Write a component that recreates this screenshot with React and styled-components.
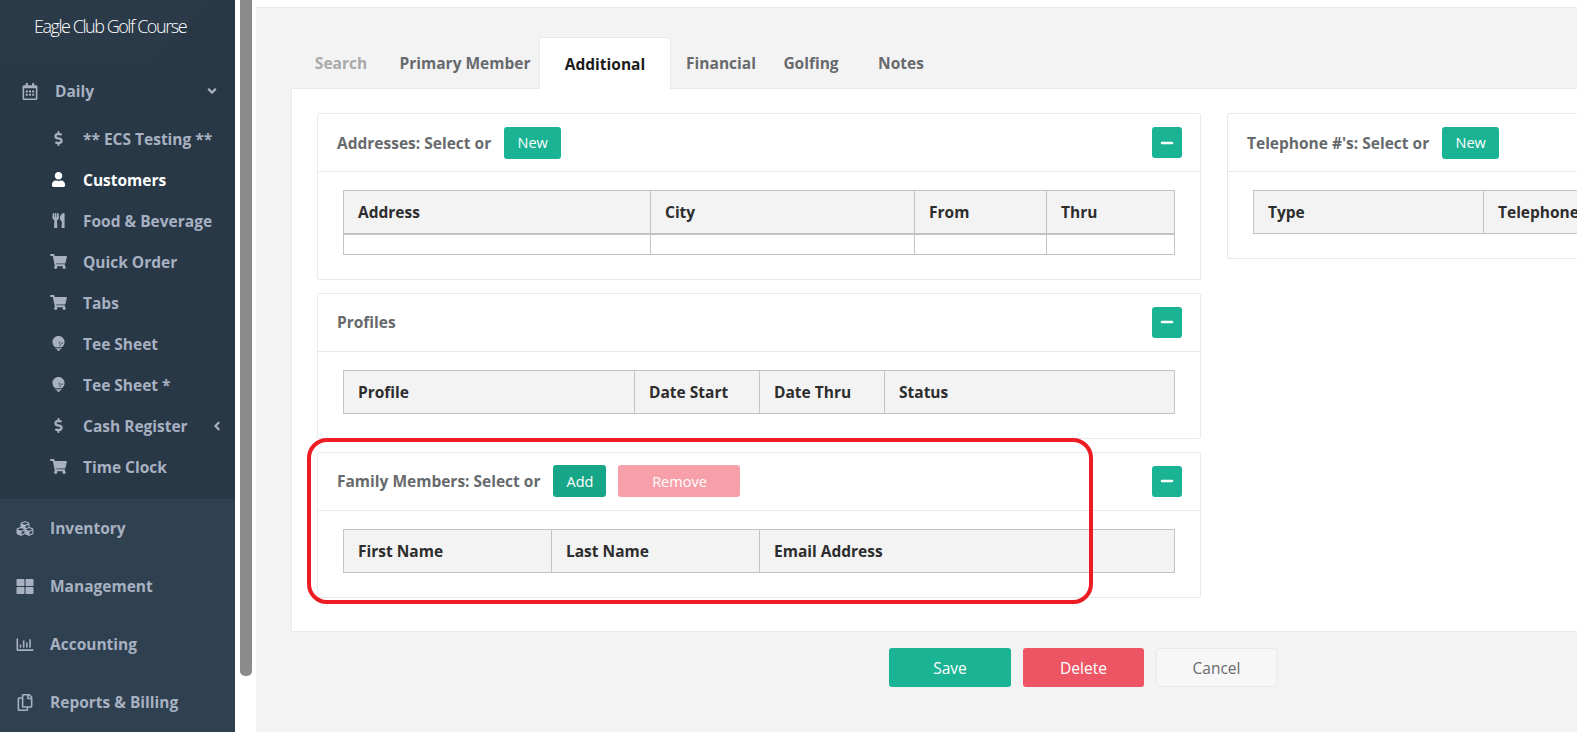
import React from 'react';
import styled, { createGlobalStyle } from 'styled-components';
import {
  FaRegCalendarAlt, FaDollarSign, FaUser, FaUtensils, FaShoppingCart, FaGolfBall,
  FaCubes, FaThLarge, FaRegChartBar, FaRegCopy, FaMinus, FaAngleDown, FaAngleLeft,
} from 'react-icons/fa';

const GlobalStyle = createGlobalStyle`
  html, body { margin: 0; padding: 0; height: 100%; overflow: hidden; }
  body { font-family: "Open Sans", "Liberation Sans", sans-serif; background: #fff; }
  #root { height: 100%; }
`;

const Page = styled.div`
  display: flex;
  width: 1577px;
  height: 732px;
  overflow: hidden;
  background: #fff;
`;

const Sidebar = styled.nav`
  flex: 0 0 235px;
  display: flex;
  flex-direction: column;
  background: #2f4050;
`;

const Logo = styled.div`
  height: 64px;
  padding-top: 14px;
  box-sizing: border-box;
  text-align: center;
  padding-right: 15px;
  color: #fff;
  font-size: 18px;
  font-weight: 300;
  line-height: 25px;
  letter-spacing: -1.45px;
  white-space: nowrap;
  background: linear-gradient(135deg, #2b3a49 0 70%, #293846 70%);
`;

const DailyBlock = styled.div`
  background: #293846;
  height: 435px;
  padding-top: 0;
`;

const TopRow = styled.div`
  display: flex;
  align-items: center;
  height: ${(p) => p.$h || 58}px;
  padding-left: ${(p) => p.$pad || 15}px;
  color: #a7b1c2;
  font-size: 15.5px;
  font-weight: 700;
  svg.main { flex: 0 0 20px; width: 18px; height: 17px; margin-right: 15px; }
`;

const Row = styled.div`
  display: flex;
  align-items: center;
  height: 41px;
  padding-left: 50px;
  color: ${(p) => (p.$active ? '#fff' : '#a7b1c2')};
  font-size: 15.5px;
  font-weight: 700;
  white-space: nowrap;
  svg.main { flex: 0 0 17px; width: 15px; height: 15px; margin-right: 16px; }
`;

const Caret = styled.span`
  position: absolute;
  display: flex;
  left: ${(p) => p.$x}px;
  svg { width: 14px; height: 14px; }
`;

const CaretHolder = styled.div`
  position: relative;
`;

const ScrollTrack = styled.div`
  flex: 0 0 12px;
  margin-left: 5px;
  height: 676px;
  background: #8b8b8b;
  border-radius: 0 0 5px 5px;
`;

const Main = styled.main`
  flex: 0 0 1322px;
  margin-left: 4px;
  margin-top: 7px;
  background: #f3f3f4;
  border-top: 1px solid #e7eaec;
  box-sizing: border-box;
  padding: 29px 0 0 35px;
  overflow: hidden;
`;

const Tabs = styled.div`
  display: flex;
  height: 52px;
  box-sizing: border-box;
  position: relative;
  z-index: 1;
`;

const Tab = styled.div`
  display: flex;
  align-items: center;
  justify-content: center;
  height: ${(p) => (p.$active ? 52 : 51)}px;
  box-sizing: border-box;
  width: ${(p) => p.$w}px;
  font-size: 15.5px;
  font-weight: 700;
  color: ${(p) => (p.$active ? '#1a1a1a' : p.$muted ? '#a9a9a9' : '#676a6c')};
  background: ${(p) => (p.$active ? '#fff' : 'transparent')};
  border: ${(p) => (p.$active ? '1px solid #e7eaec' : 'none')};
  border-bottom: none;
  border-radius: 3px 3px 0 0;
  white-space: nowrap;
`;

const TabPane = styled.div`
  width: 1500px;
  height: 544px;
  margin-top: -1px;
  box-sizing: border-box;
  padding: 24px 0 0 25px;
  background: #fff;
  border: 1px solid #e7eaec;
  display: grid;
  grid-template-columns: 884px 884px;
  column-gap: 26px;
  align-items: start;
`;

const Column = styled.div`
  display: flex;
  flex-direction: column;
  gap: 13px;
`;

const Panel = styled.section`
  border: 1px solid #e7eaec;
  border-radius: 2px;
  background: #fff;
`;

const PanelHead = styled.header`
  display: flex;
  align-items: center;
  height: ${(p) => p.$h || 57}px;
  padding: 0 18px 0 19px;
  border-bottom: 1px solid #e7eaec;
  color: #676a6c;
  font-size: 15.5px;
  font-weight: 700;
  white-space: nowrap;
`;

const HeadTitle = styled.span`
  margin-right: 13px;
`;

const SmallBtn = styled.button`
  height: 32px;
  width: ${(p) => p.$w}px;
  margin-right: 12px;
  padding: 0;
  border: none;
  border-radius: 3px;
  background: ${(p) => p.$bg || '#1ab394'};
  color: #fff;
  font-family: inherit;
  font-size: 14.5px;
`;

const Collapse = styled.button`
  margin-left: auto;
  width: 30px;
  height: 31px;
  padding: 0;
  border: none;
  border-radius: 3px;
  background: #1ab394;
  color: #fff;
  display: flex;
  align-items: center;
  justify-content: center;
  svg { width: 14px; height: 14px; }
`;

const PanelBody = styled.div`
  padding: 18px 25px ${(p) => p.$pb || 24}px;
`;

const Table = styled.table`
  width: 100%;
  border-collapse: collapse;
  table-layout: fixed;
`;

const Th = styled.th`
  height: 43px;
  box-sizing: border-box;
  width: ${(p) => (p.$w ? `${p.$w}px` : 'auto')};
  padding: 0 14px;
  text-align: left;
  background: #f3f3f3;
  border: 1px solid #c4c4c4;
  border-bottom-width: ${(p) => (p.$thick ? 2 : 1)}px;
  color: #2d2d2d;
  font-size: 15.5px;
  font-weight: 700;
  white-space: nowrap;
`;

const Td = styled.td`
  height: 19px;
  padding: 0;
  border: 1px solid #c4c4c4;
`;

const Actions = styled.div`
  display: flex;
  gap: 12px;
  margin: 16px 0 0 598px;
`;

const ActionBtn = styled.button`
  width: ${(p) => p.$w}px;
  height: 39px;
  padding: 0;
  border: ${(p) => (p.$plain ? '1px solid #e7eaec' : 'none')};
  border-radius: 3px;
  background: ${(p) => p.$bg};
  color: ${(p) => (p.$plain ? '#676a6c' : '#fff')};
  font-family: inherit;
  font-size: 15.5px;
`;

const Annotation = styled.div`
  position: absolute;
  left: 307px;
  top: 438px;
  width: 786px;
  height: 166px;
  box-sizing: border-box;
  border: 4px solid #ed1c24;
  border-radius: 20px;
`;

const daily = [
  { icon: FaDollarSign, label: '** ECS Testing **' },
  { icon: FaUser, label: 'Customers', active: true },
  { icon: FaUtensils, label: 'Food & Beverage' },
  { icon: FaShoppingCart, label: 'Quick Order' },
  { icon: FaShoppingCart, label: 'Tabs' },
  { icon: FaGolfBall, label: 'Tee Sheet' },
  { icon: FaGolfBall, label: 'Tee Sheet *' },
  { icon: FaDollarSign, label: 'Cash Register', sub: true },
  { icon: FaShoppingCart, label: 'Time Clock' },
];

const sections = [
  { icon: FaCubes, label: 'Inventory' },
  { icon: FaThLarge, label: 'Management' },
  { icon: FaRegChartBar, label: 'Accounting' },
  { icon: FaRegCopy, label: 'Reports & Billing' },
];

export default function App() {
  return (
    <>
      <GlobalStyle />
      <Page>
        <Sidebar>
          <Logo>Eagle Club Golf Course</Logo>
          <DailyBlock>
            <TopRow $h={54} $pad={20}>
              <FaRegCalendarAlt className="main" />
              Daily
              <CaretHolder><Caret $x={-2 + 113} style={{ top: -7 }}><FaAngleDown /></Caret></CaretHolder>
            </TopRow>
            {daily.map((item) => (
              <Row key={item.label} $active={item.active}>
                <item.icon className="main" />
                {item.label}
                {item.sub && <CaretHolder><Caret $x={22} style={{ top: -7 }}><FaAngleLeft /></Caret></CaretHolder>}
              </Row>
            ))}
          </DailyBlock>
          {sections.map((item) => (
            <TopRow key={item.label}>
              <item.icon className="main" />
              {item.label}
            </TopRow>
          ))}
        </Sidebar>
        <ScrollTrack />
        <Main>
          <Tabs>
            <Tab $w={100} $muted>Search</Tab>
            <Tab $w={148}>Primary Member</Tab>
            <Tab $w={132} $active>Additional</Tab>
            <Tab $w={100}>Financial</Tab>
            <Tab $w={80}>Golfing</Tab>
            <Tab $w={100}>Notes</Tab>
          </Tabs>
          <TabPane>
            <Column>
              <Panel>
                <PanelHead>
                  <HeadTitle>Addresses: Select or</HeadTitle>
                  <SmallBtn $w={57}>New</SmallBtn>
                  <Collapse><FaMinus /></Collapse>
                </PanelHead>
                <PanelBody>
                  <Table>
                    <thead>
                      <tr>
                        <Th $thick $w={307}>Address</Th>
                        <Th $thick $w={264}>City</Th>
                        <Th $thick $w={132}>From</Th>
                        <Th $thick>Thru</Th>
                      </tr>
                    </thead>
                    <tbody>
                      <tr><Td /><Td /><Td /><Td /></tr>
                    </tbody>
                  </Table>
                </PanelBody>
              </Panel>
              <Panel>
                <PanelHead>
                  <HeadTitle>Profiles</HeadTitle>
                  <Collapse><FaMinus /></Collapse>
                </PanelHead>
                <PanelBody>
                  <Table>
                    <thead>
                      <tr>
                        <Th $w={291}>Profile</Th>
                        <Th $w={125}>Date Start</Th>
                        <Th $w={125}>Date Thru</Th>
                        <Th>Status</Th>
                      </tr>
                    </thead>
                  </Table>
                </PanelBody>
              </Panel>
              <Panel>
                <PanelHead>
                  <HeadTitle>Family Members: Select or</HeadTitle>
                  <SmallBtn $w={53} $bg="#18a689">Add</SmallBtn>
                  <SmallBtn $w={122} $bg="#f8a0a9">Remove</SmallBtn>
                  <Collapse><FaMinus /></Collapse>
                </PanelHead>
                <PanelBody>
                  <Table>
                    <thead>
                      <tr>
                        <Th $w={208}>First Name</Th>
                        <Th $w={208}>Last Name</Th>
                        <Th>Email Address</Th>
                      </tr>
                    </thead>
                  </Table>
                </PanelBody>
              </Panel>
            </Column>
            <Column>
              <Panel>
                <PanelHead>
                  <HeadTitle>Telephone #'s: Select or</HeadTitle>
                  <SmallBtn $w={57}>New</SmallBtn>
                </PanelHead>
                <PanelBody>
                  <Table>
                    <thead>
                      <tr>
                        <Th $w={230}>Type</Th>
                        <Th>Telephone</Th>
                      </tr>
                    </thead>
                  </Table>
                </PanelBody>
              </Panel>
            </Column>
          </TabPane>
          <Actions>
            <ActionBtn $w={122} $bg="#1ab394">Save</ActionBtn>
            <ActionBtn $w={121} $bg="#ed5565">Delete</ActionBtn>
            <ActionBtn $w={121} $bg="#f7f7f8" $plain>Cancel</ActionBtn>
          </Actions>
        </Main>
      </Page>
      <Annotation />
    </>
  );
}
